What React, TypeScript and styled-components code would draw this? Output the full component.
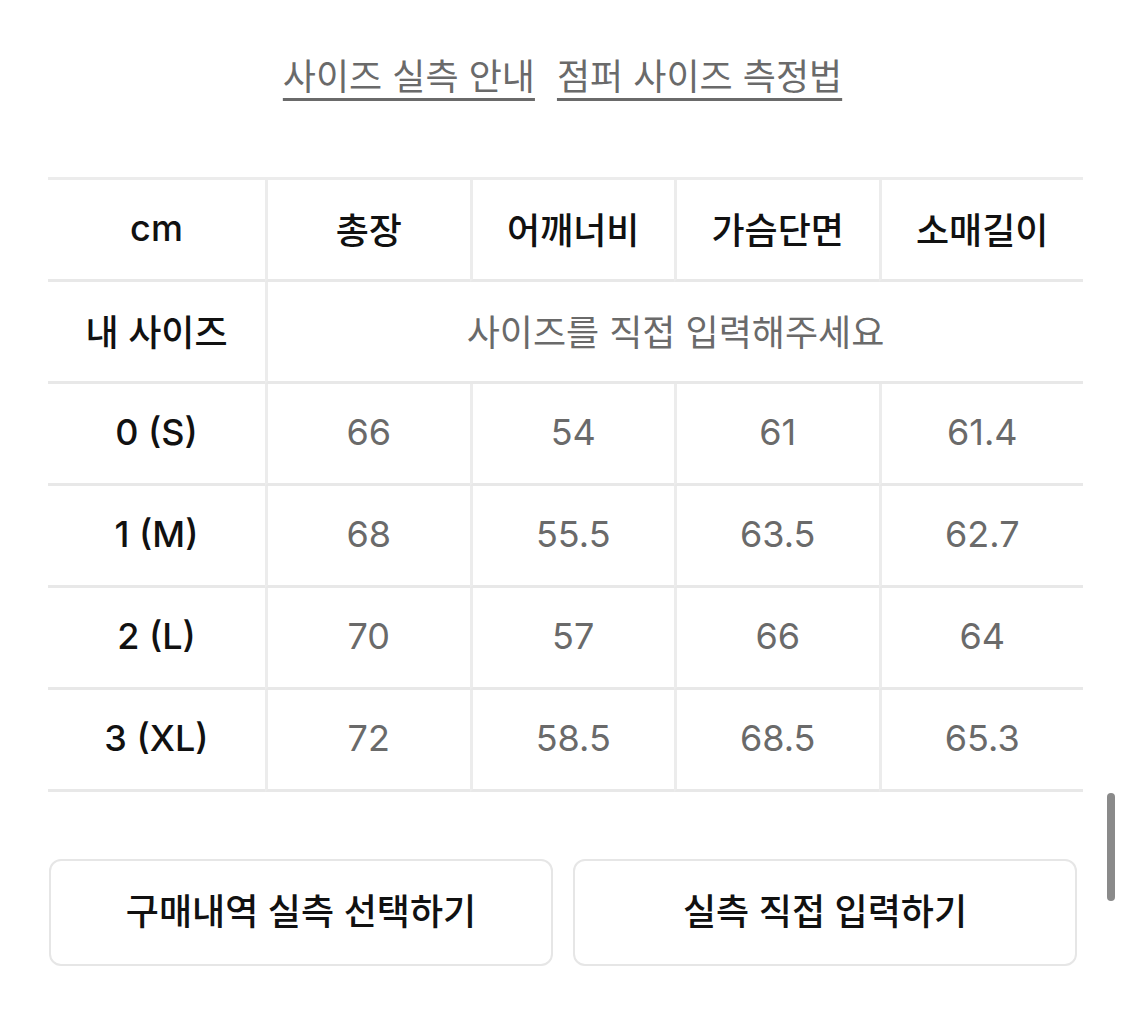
import React from "react";
import styled, { createGlobalStyle } from "styled-components";

const Global = createGlobalStyle`
  html, body { margin: 0; padding: 0; background: #fff; }
  body { font-family: "Inter", "Noto Sans CJK KR", "Noto Sans", sans-serif; -webkit-font-smoothing: antialiased; }
  * { box-sizing: border-box; }
`;

const Page = styled.div`
  width: 1125px;
  height: 1023px;
  position: relative;
  padding: 0 42px 0 48px;
  overflow: hidden;
`;

const Links = styled.div`
  display: flex;
  justify-content: center;
  gap: 22px;
  padding-top: 53px;
  padding-right: 6px;
  height: 177px;
`;

const LinkText = styled.a`
  color: #6a6a6a;
  font-size: 36px;
  line-height: 48px;
  text-decoration: underline;
  text-decoration-thickness: 3px;
  text-underline-offset: 8px;
  cursor: pointer;
`;

const Table = styled.div`
  display: grid;
  grid-template-columns: 217px repeat(4, 1fr);
  width: 1035px;
  border-top: 3px solid #ececec;
`;

const Cell = styled.div<{ $head?: boolean; $first?: boolean; $span?: number }>`
  height: 102px;
  display: flex;
  align-items: center;
  justify-content: center;
  border-bottom: 3px solid #e8e8e8;
  border-left: ${(p) => (p.$first ? "none" : "3px solid #ececec")};
  grid-column: ${(p) => (p.$span ? `span ${p.$span}` : "auto")};
  font-size: 36px;
  color: ${(p) => (p.$head ? "#111" : "#6a6a6a")};
  font-weight: ${(p) => (p.$head ? 500 : 400)};
  padding-bottom: 4px;
`;

const Buttons = styled.div`
  display: grid;
  grid-template-columns: 504px 504px;
  gap: 20px;
  margin-top: 67px;
  padding-left: 1px;
`;

const Button = styled.button`
  height: 107px;
  background: #fff;
  border: 2px solid #e6e6e6;
  border-radius: 12px;
  font-family: inherit;
  font-size: 36px;
  font-weight: 500;
  color: #111;
  cursor: pointer;
  padding-bottom: 8px;
`;

const ScrollThumb = styled.div`
  position: absolute;
  left: 1107px;
  top: 793px;
  width: 8px;
  height: 108px;
  border-radius: 4px;
  background: #8a8a8a;
`;

const headers = ["총장", "어깨너비", "가슴단면", "소매길이"];
const rows: [string, string[]][] = [
  ["0 (S)", ["66", "54", "61", "61.4"]],
  ["1 (M)", ["68", "55.5", "63.5", "62.7"]],
  ["2 (L)", ["70", "57", "66", "64"]],
  ["3 (XL)", ["72", "58.5", "68.5", "65.3"]],
];

export default function App() {
  return (
    <Page>
      <Global />
      <Links>
        <LinkText>사이즈 실측 안내</LinkText>
        <LinkText>점퍼 사이즈 측정법</LinkText>
      </Links>
      <Table>
        <Cell $head $first>cm</Cell>
        {headers.map((h) => (
          <Cell $head key={h}>{h}</Cell>
        ))}
        <Cell $head $first>내 사이즈</Cell>
        <Cell $span={4}>사이즈를 직접 입력해주세요</Cell>
        {rows.map(([label, vals]) => (
          <React.Fragment key={label}>
            <Cell $head $first>{label}</Cell>
            {vals.map((v, i) => (
              <Cell key={i}>{v}</Cell>
            ))}
          </React.Fragment>
        ))}
      </Table>
      <Buttons>
        <Button>구매내역 실측 선택하기</Button>
        <Button>실측 직접 입력하기</Button>
      </Buttons>
      <ScrollThumb />
    </Page>
  );
}
